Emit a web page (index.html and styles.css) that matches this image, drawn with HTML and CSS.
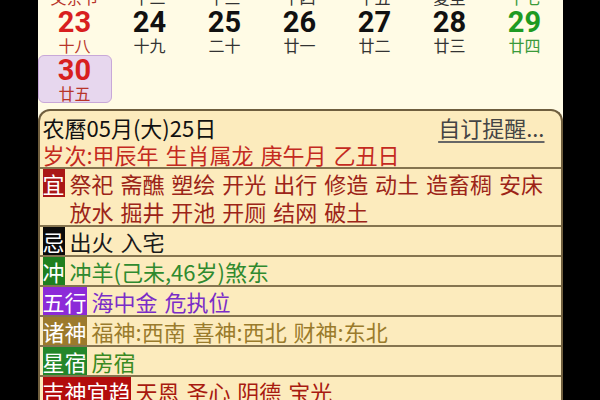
FILE: index.html
```html
<!DOCTYPE html>
<html lang="zh-CN">
<head>
  <meta charset="UTF-8">
  <meta name="viewport" content="width=device-width, initial-scale=1.0">
  <title>万年历</title>
  <link rel="stylesheet" href="styles.css">
</head>
<body>
  <div class="screen">
    <div class="month">
      <div class="day sun"><div class="num">16</div><div class="lunar">父亲节</div></div>
      <div class="day"><div class="num">17</div><div class="lunar">十二</div></div>
      <div class="day"><div class="num">18</div><div class="lunar">十三</div></div>
      <div class="day"><div class="num">19</div><div class="lunar">十四</div></div>
      <div class="day"><div class="num">20</div><div class="lunar">十五</div></div>
      <div class="day"><div class="num">21</div><div class="lunar">夏至</div></div>
      <div class="day sat"><div class="num">22</div><div class="lunar">十七</div></div>

      <div class="day sun"><div class="num">23</div><div class="lunar">十八</div></div>
      <div class="day"><div class="num">24</div><div class="lunar">十九</div></div>
      <div class="day"><div class="num">25</div><div class="lunar">二十</div></div>
      <div class="day"><div class="num">26</div><div class="lunar">廿一</div></div>
      <div class="day"><div class="num">27</div><div class="lunar">廿二</div></div>
      <div class="day"><div class="num">28</div><div class="lunar">廿三</div></div>
      <div class="day sat"><div class="num">29</div><div class="lunar">廿四</div></div>

      <div class="day sun today"><div class="num">30</div><div class="lunar">廿五</div></div>
    </div>

    <div class="almanac">
      <div class="head">
        <span>农曆05月(大)25日</span>
        <a class="remind" href="#">自订提醒...</a>
      </div>
      <div class="year-line">岁次:甲辰年 生肖属龙 庚午月 乙丑日</div>

      <div class="row yi">
        <span class="tag">宜</span>
        <span class="items">祭祀 斋醮 塑绘 开光 出行 修造 动土 造畜稠 安床 放水 掘井 开池 开厕 结网 破土</span>
      </div>
      <div class="row ji">
        <span class="tag">忌</span>
        <span class="items">出火 入宅</span>
      </div>
      <div class="row chong">
        <span class="tag">冲</span>
        <span class="items">冲羊(己未,46岁)煞东</span>
      </div>
      <div class="row wuxing">
        <span class="tag">五行</span>
        <span class="items">海中金 危执位</span>
      </div>
      <div class="row zhushen">
        <span class="tag">诸神</span>
        <span class="items">福神:西南 喜神:西北 财神:东北</span>
      </div>
      <div class="row xingxiu">
        <span class="tag">星宿</span>
        <span class="items">房宿</span>
      </div>
      <div class="row jishen">
        <span class="tag">吉神宜趋</span>
        <span class="items">天恩 圣心 阴德 宝光</span>
      </div>
    </div>
  </div>
</body>
</html>
```

FILE: styles.css
```css
body {
  margin: 0;
  background-color: #000;
  font-family: "Noto Sans CJK SC", sans-serif;
  overflow: hidden;
}
.screen {
  width: 525px;
  margin: 0 auto;
  background-color: #fffbe5;
}
.month {
  display: grid;
  grid-template-columns: repeat(7, 1fr);
  margin-top: -41px;
  padding-bottom: 6px;
}
.day {
  box-sizing: border-box;
  height: 48px;
  margin-right: 1px;
  border: 1px solid transparent;
  border-radius: 6px;
  text-align: center;
  color: #111;
}
.day .num {
  font-family: Roboto, "Noto Sans CJK SC", sans-serif;
  font-weight: bold;
  font-size: 29px;
  line-height: 29px;
}
.day .lunar {
  font-size: 16px;
  line-height: 17px;
  color: #333;
}
.day.sun .num {
  color: #d81f1f;
}
.day.sun .lunar {
  color: #b8352a;
}
.day.sat .num {
  color: #1e9a22;
}
.day.sat .lunar {
  color: #3a9a3a;
}
.day.today {
  background-color: #e7d7ee;
  border-color: #c8a8d8;
}
.almanac {
  background-color: #fcebbd;
  border: 2px solid #6f5e3e;
  border-bottom: none;
  border-radius: 12px 12px 0 0;
  font-size: 22px;
  word-spacing: 2px;
}
.head {
  display: flex;
  justify-content: space-between;
  padding: 3px 16px 0 3px;
  line-height: 27px;
  color: #111;
}
.head .remind {
  color: #444;
  text-decoration: underline;
  text-decoration-thickness: 2px;
  text-decoration-color: #666;
  text-underline-offset: 4px;
}
.year-line {
  padding: 0 3px;
  line-height: 26px;
  color: #c42a1f;
  border-bottom: 2px solid #85744f;
}
.row {
  display: flex;
  align-items: flex-start;
  padding: 0 3px;
  line-height: 28px;
  border-bottom: 2px solid #85744f;
}
.row .tag {
  flex: none;
  color: #fff;
}
.row .items {
  margin-left: 5px;
}
.yi .tag { background-color: #aa1717; }
.yi .items { color: #9c2418; }
.ji .tag { background-color: #0a0a0a; }
.ji .items { color: #1a1a1a; }
.chong .tag { background-color: #1f7f1f; }
.chong .items { color: #2f8a2f; }
.wuxing .tag { background-color: #8c2ad8; }
.wuxing .items { color: #7a2dc8; }
.zhushen .tag { background-color: #9c7a2c; }
.zhushen .items { color: #9a7b2c; }
.xingxiu .tag { background-color: #23862a; }
.xingxiu .items { color: #3a8a22; }
.jishen .tag { background-color: #b30c0c; }
.jishen .items { color: #a81a10; }
```
